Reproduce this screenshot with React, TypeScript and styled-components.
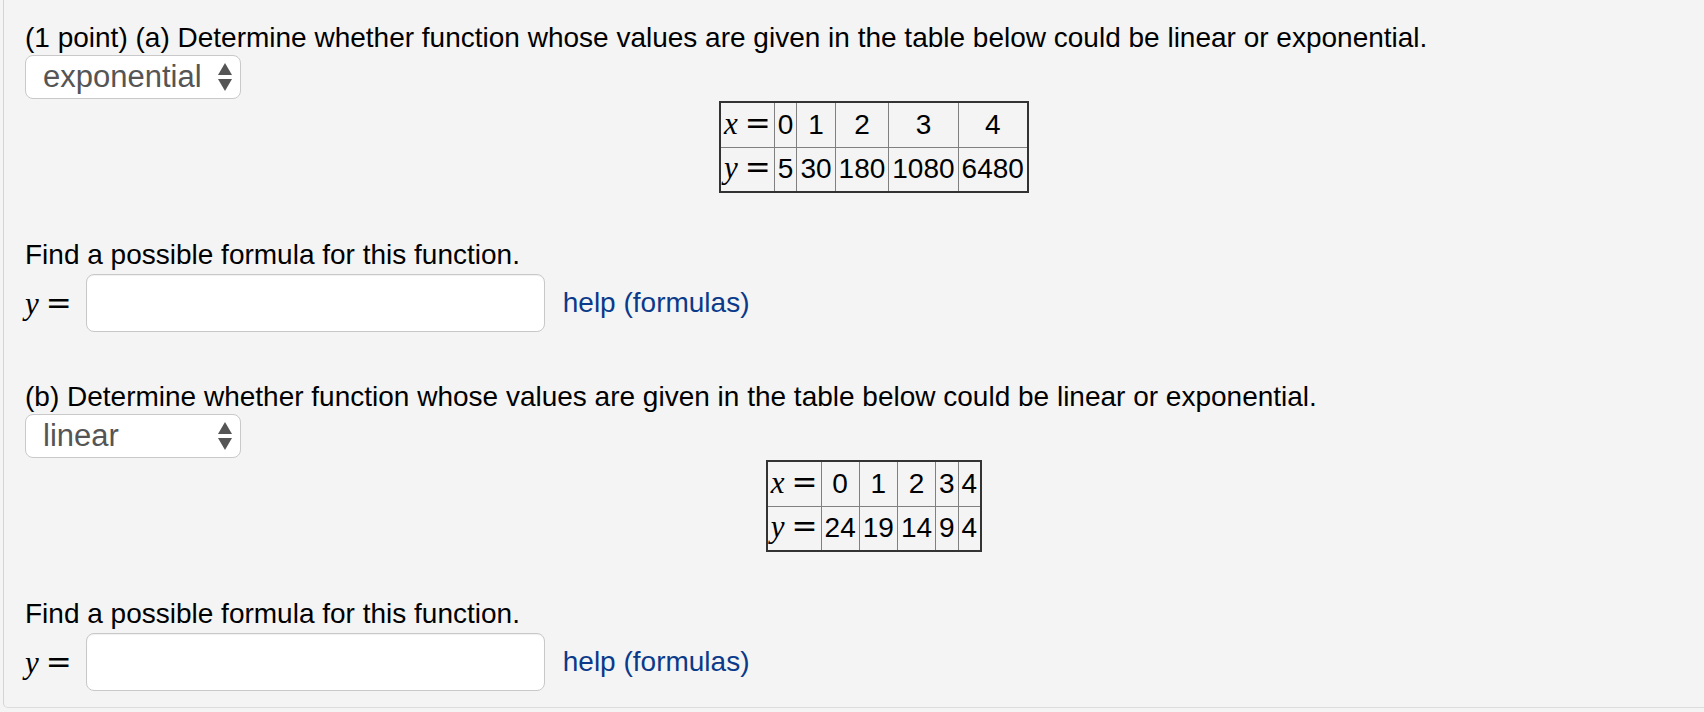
import React from 'react';
import styled, { createGlobalStyle } from 'styled-components';

const GlobalStyle = createGlobalStyle`
  html, body {
    margin: 0;
    padding: 0;
    overflow: hidden;
    background-color: #f4f4f4;
  }
  body {
    font-family: 'Liberation Sans', Arial, Helvetica, sans-serif;
    color: #000;
  }
`;

const Panel = styled.div`
  box-sizing: content-box;
  width: 1698px;
  margin-left: 3px;
  padding: 21px 21px 16px 21px;
  background-color: #f4f4f4;
  border-left: 1px solid #d4d4d4;
  border-bottom: 1px solid #dcdcdc;
  border-bottom-left-radius: 5px;
`;

const Part = styled.section<{ $gap?: number }>`
  margin-top: ${(props) => props.$gap || 0}px;
`;

const Prompt = styled.p<{ $gap?: number }>`
  margin: ${(props) => props.$gap || 0}px 0 0 0;
  font-size: 28px;
  line-height: 1.2;
`;

const SelectWrap = styled.div`
  position: relative;
  width: 216px;
  height: 44px;
`;

const Select = styled.select`
  display: block;
  appearance: none;
  -webkit-appearance: none;
  box-sizing: border-box;
  width: 216px;
  height: 44px;
  margin: 0;
  padding: 0 0 0 17px;
  border: 1px solid #c9c9c9;
  border-radius: 8px;
  background-color: #fff;
  color: #555;
  font-family: 'Liberation Sans', Arial, Helvetica, sans-serif;
  font-size: 31px;
  outline: none;
`;

const Arrows = styled.svg`
  position: absolute;
  top: 8px;
  right: 9px;
  pointer-events: none;
`;

const TableRow = styled.div`
  display: flex;
  justify-content: center;
  margin-top: 2px;
`;

const ValueTable = styled.table`
  border: 2px solid #333;
  border-spacing: 0;
  font-size: 28px;
`;

const Cell = styled.td<{ $lastCol?: boolean; $lastRow?: boolean }>`
  padding: 0 3px;
  height: ${(props) => (props.$lastRow ? '43px' : '44px')};
  line-height: 40px;
  text-align: center;
  white-space: nowrap;
  border-right: ${(props) => (props.$lastCol ? 'none' : '1px solid #808080')};
  border-bottom: ${(props) => (props.$lastRow ? 'none' : '1px solid #808080')};
`;

const MathVar = styled.i`
  font-family: 'Liberation Serif', 'Times New Roman', serif;
  font-size: 31px;
  line-height: 1;
`;

const MathEq = styled.span`
  font-family: 'DejaVu Serif', 'Liberation Serif', serif;
  font-size: 31px;
  line-height: 1;
  margin-left: 7px;
`;

const AnswerRow = styled.div`
  display: flex;
  align-items: center;
  margin-top: 3px;
`;

const MathLabel = styled.span`
  display: inline-flex;
  align-items: baseline;
  margin-right: 14px;
`;

const AnswerInput = styled.input`
  box-sizing: border-box;
  width: 459px;
  height: 58px;
  margin: 0;
  padding: 0 10px;
  border: 1px solid #c8c8c8;
  border-radius: 8px;
  background-color: #fff;
  box-shadow: inset 0 1px 1px rgba(0, 0, 0, 0.06);
  font-size: 28px;
  outline: none;
`;

const HelpLink = styled.a`
  margin-left: 18px;
  font-size: 28px;
  color: #0b3a8a;
  text-decoration: none;
`;

type TableProps = { xs: string[]; ys: string[] };

function Values({ xs, ys }: TableProps) {
  return (
    <TableRow>
      <ValueTable>
        <tbody>
          <tr>
            <Cell>
              <MathVar>x</MathVar>
              <MathEq>=</MathEq>
            </Cell>
            {xs.map((v, i) => (
              <Cell key={i} $lastCol={i === xs.length - 1}>
                {v}
              </Cell>
            ))}
          </tr>
          <tr>
            <Cell $lastRow>
              <MathVar>y</MathVar>
              <MathEq>=</MathEq>
            </Cell>
            {ys.map((v, i) => (
              <Cell key={i} $lastRow $lastCol={i === ys.length - 1}>
                {v}
              </Cell>
            ))}
          </tr>
        </tbody>
      </ValueTable>
    </TableRow>
  );
}

function Chooser({ value }: { value: string }) {
  return (
    <SelectWrap>
      <Select defaultValue={value}>
        <option value="?">?</option>
        <option value="linear">linear</option>
        <option value="exponential">exponential</option>
      </Select>
      <Arrows width="14" height="28" viewBox="0 0 14 28">
        <path d="M7 0 L14 12 L0 12 Z" fill="#555" />
        <path d="M0 16 L14 16 L7 28 Z" fill="#555" />
      </Arrows>
    </SelectWrap>
  );
}

function Answer() {
  return (
    <AnswerRow>
      <MathLabel>
        <MathVar>y</MathVar>
        <MathEq>=</MathEq>
      </MathLabel>
      <AnswerInput type="text" />
      <HelpLink href="#">help (formulas)</HelpLink>
    </AnswerRow>
  );
}

function App() {
  return (
    <>
      <GlobalStyle />
      <Panel>
        <Part>
          <Prompt>
            (1 point) (a) Determine whether function whose values are given in the table below could be
            linear or exponential.
          </Prompt>
          <Chooser value="exponential" />
          <Values xs={['0', '1', '2', '3', '4']} ys={['5', '30', '180', '1080', '6480']} />
          <Prompt $gap={45}>Find a possible formula for this function.</Prompt>
          <Answer />
        </Part>
        <Part $gap={48}>
          <Prompt>
            (b) Determine whether function whose values are given in the table below could be linear or
            exponential.
          </Prompt>
          <Chooser value="linear" />
          <Values xs={['0', '1', '2', '3', '4']} ys={['24', '19', '14', '9', '4']} />
          <Prompt $gap={45}>Find a possible formula for this function.</Prompt>
          <Answer />
        </Part>
      </Panel>
    </>
  );
}

export default App;
